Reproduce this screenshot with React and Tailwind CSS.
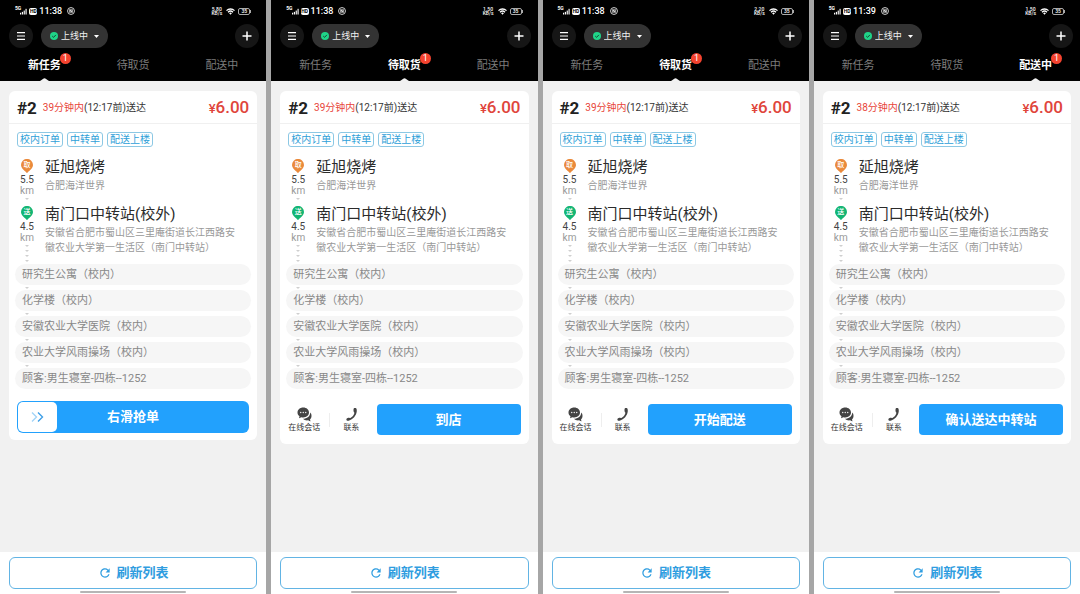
import React from "react";
import { MdRefresh } from "react-icons/md";

const TABS = ["新任务", "待取货", "配送中"];
const TAGS = ["校内订单", "中转单", "配送上楼"];
const STOPS = [
  "研究生公寓（校内）",
  "化学楼（校内）",
  "安徽农业大学医院（校内）",
  "农业大学风雨操场（校内）",
  "顾客:男生寝室-四栋--1252",
];
const SCREENS = [
  { time: "11:38", speed: "5.80", tab: 0, minutes: 39, action: null },
  { time: "11:38", speed: "1.50", tab: 1, minutes: 39, action: "到店" },
  { time: "11:38", speed: "2.20", tab: 1, minutes: 39, action: "开始配送" },
  { time: "11:39", speed: "1.50", tab: 2, minutes: 38, action: "确认送达中转站" },
];

function StatusBar({ time, speed }) {
  return (
    <div className="flex h-[22px] items-center justify-between px-[15px] text-white">
      <div className="flex items-center">
        <span className="self-start text-[5px] leading-[6px] font-bold">5G</span>
        <svg className="-ml-px h-2 w-[7px]" viewBox="0 0 8 8" fill="#fff" aria-hidden="true">
          <rect x="0" y="6" width="1.3" height="2" />
          <rect x="2.1" y="5" width="1.3" height="3" />
          <rect x="4.2" y="3.5" width="1.3" height="4.5" />
          <rect x="6.3" y="1.5" width="1.3" height="6.5" />
        </svg>
        <span className="ml-[2px] flex h-[7px] w-2 items-center justify-center rounded-xs bg-white text-[5px] leading-[7px] font-bold text-black">HD</span>
        <span className="ml-[2px] text-[9px] leading-3 font-medium">{time}</span>
        <svg className="ml-[5px] h-2 w-2" viewBox="0 0 16 16" fill="none" stroke="#e5e5e5" strokeWidth="1.8" aria-hidden="true">
          <circle cx="8" cy="8" r="6.9" />
          <path d="M5.5 11.5V5l5 6V4.500M8 4v8" />
        </svg>
      </div>
      <div className="flex items-center">
        <span className="flex flex-col items-center text-[5px] leading-[4px] font-medium">
          <span>{speed}</span>
          <span>KB/s</span>
        </span>
        <svg className="ml-[4px] h-[7px] w-[9px]" viewBox="0 0 18 14" fill="none" stroke="#fff" strokeWidth="2.6" aria-hidden="true">
          <path d="M1 5.200a11.500 11.500 0 0 1 16 0M4 8.400a7.200 7.200 0 0 1 10 0" />
          <path d="M6.200 10.500a4 4 0 0 1 5.600 0L9 13.500z" fill="#fff" stroke="none" />
        </svg>
        <span className="ml-[3px] flex h-[7px] w-[12px] items-center justify-center rounded-xs border border-[#aaa] text-[5px] leading-[5px] font-medium">35</span>
        <span className="h-[3px] w-px bg-[#aaa]" />
      </div>
    </div>
  );
}

function Header({ time, speed, tab }) {
  return (
    <header className="bg-black text-white">
      <StatusBar time={time} speed={speed} />
      <div className="mt-[2px] flex items-center pr-[7px] pl-[9px]">
        <button type="button" aria-label="菜单" className="flex size-6 items-center justify-center rounded-full bg-[#161616]">
          <svg className="size-2" viewBox="0 0 8 8" stroke="#fff" strokeWidth="1.100" aria-hidden="true">
            <path d="M0 .6h8M0 4h8M0 7.400h8" />
          </svg>
        </button>
        <label className="ml-2 flex h-6 items-center rounded-full bg-[#333] px-[9px]">
          <svg className="size-2" viewBox="0 0 16 16" aria-hidden="true">
            <circle cx="8" cy="8" r="8" fill="#1fd488" />
            <path d="M4.500 8.200l2.600 2.500L11.800 5.800" fill="none" stroke="#14352a" strokeWidth="1.800" />
          </svg>
          <select aria-label="接单状态" className="ml-[3px] h-4 w-[30px] appearance-none bg-transparent text-[9px] leading-4 text-[#f0f0f0] outline-none">
            <option>上线中</option>
          </select>
          <svg className="ml-[3px] h-[3px] w-[5px]" viewBox="0 0 10 6" fill="#fff" aria-hidden="true">
            <path d="M0 0h10L5 6z" />
          </svg>
        </label>
        <button type="button" aria-label="添加" className="ml-auto flex size-6 items-center justify-center rounded-full bg-[#161616]">
          <svg className="size-[10px]" viewBox="0 0 10 10" stroke="#fff" strokeWidth="1.500" aria-hidden="true">
            <path d="M5 .5v9M.5 5h9" />
          </svg>
        </button>
      </div>
      <div role="tablist" className="grid h-[33px] grid-cols-3">
        {TABS.map((name, i) => (
          <button
            key={name}
            type="button"
            role="tab"
            aria-selected={i === tab}
            className={
              "relative flex items-center justify-center pt-[3px] text-[11px] leading-4 " +
              (i === tab ? "font-bold text-white" : "text-[#7c7c7c]")
            }
          >
            <span className="relative">
              {name}
              {i === tab && (
                <span className="absolute -top-[5px] -right-[10px] flex size-[11px] items-center justify-center rounded-full bg-[#f5432f] text-[9px] leading-none font-normal">1</span>
              )}
            </span>
            {i === tab && (
              <svg className="absolute bottom-0 h-[3px] w-[9px]" viewBox="0 0 9 3" fill="#f1f1f1" aria-hidden="true">
                <path d="M0 3L3.700.4Q4.500 0 5.300.4L9 3z" />
              </svg>
            )}
          </button>
        ))}
      </div>
    </header>
  );
}

function Ticks({ count }) {
  return (
    <span className="flex flex-col items-center gap-[3px]" aria-hidden="true">
      {Array.from({ length: count }, (_, i) => (
        <svg key={i} className="h-[2px] w-[4px]" viewBox="0 0 8 4" fill="#cfcfcf">
          <path d="M0 0h8L4 4z" />
        </svg>
      ))}
    </span>
  );
}

function Pin({ label, tone }) {
  return (
    <span className="relative flex h-[14px] w-3 justify-center">
      <svg className={"absolute inset-0 h-[14px] w-3 " + tone} viewBox="0 0 12 14" fill="currentColor" aria-hidden="true">
        <path d="M6 14C4.600 12.200 0 9.700 0 5.900a6 6 0 0 1 12 0C12 9.700 7.400 12.200 6 14z" />
      </svg>
      <span className="relative text-[7px] leading-3 font-medium text-white">{label}</span>
    </span>
  );
}

function Place({ pin, tone, distance, ticks, name, address }) {
  return (
    <div className="flex">
      <div className="flex w-5 shrink-0 flex-col items-center pt-[3px]">
        <Pin label={pin} tone={tone} />
        <span className="text-[10px] leading-[14px] text-[#444]">{distance}</span>
        <span className="mb-[3px] text-[10px] leading-[8px] text-[#999]">km</span>
        <Ticks count={ticks} />
      </div>
      <div className="ml-2 min-w-0 flex-1 pr-2">
        <h2 className="text-[15px] leading-[22px] text-[#2b2b2b]">{name}</h2>
        <p className="text-[10px] leading-[15px] text-[#999]">{address}</p>
      </div>
    </div>
  );
}

function ChatIcon() {
  return (
    <svg className="size-[15px]" viewBox="0 0 30 30" fill="#444" aria-hidden="true">
      <path d="M26.500 11c2 2 2.500 4.300 2.500 7 0 3-1.200 5.200-3 6.800.1 1.600.6 2.700 1.600 3.900-2.200-.2-3.800-.9-5.200-2-4.200.7-8-.5-10.300-3.200C20 23.500 26.500 18.500 26.500 11z" />
      <path d="M12.500 1C5.800 1 1 5.400 1 11c0 3.200 1.500 5.900 4 7.700l-1 4 4.800-2.400c1.200.3 2.400.5 3.700.5C19.200 20.800 24 16.600 24 11S19.200 1 12.500 1z" />
      <g fill="#fff">
        <circle cx="7.500" cy="11" r="1.300" />
        <circle cx="12.500" cy="11" r="1.300" />
        <circle cx="17.500" cy="11" r="1.300" />
      </g>
    </svg>
  );
}

function PhoneIcon() {
  return (
    <svg className="size-[15px]" viewBox="0 0 30 30" fill="#444" aria-hidden="true">
      <path d="M19.800 2.500c1.200-.7 3.300-.8 4.400.1 1.200 1 1.600 3.600 1.300 6.400C24.600 17 18 25 9.500 27.400c-1.800.4-3.600.2-4.300-.8-.7-1-.5-2.700.3-3.700.8-.9 3.800-1.800 5-1.400 1 .4 1.300 1 2.300.6 4-1.800 7-6 8-10 .2-1-.7-1.300-1.200-2.200-.8-1.500-.9-6.500.2-7.400z" />
    </svg>
  );
}

function Contact({ icon, label }) {
  return (
    <button type="button" className="flex flex-col items-center text-[8px] leading-[11px] text-[#333]">
      {icon}
      {label}
    </button>
  );
}

function OrderCard({ minutes, action }) {
  return (
    <article className="mx-[9px] mt-[10px] rounded-md bg-white">
      <div className="flex h-[33px] items-center border-b border-[#f0f0f0] px-2 pt-px">
        <span className="text-[17px] leading-6 font-bold text-[#222]">#2</span>
        <span className="ml-[6px] text-[10px] leading-4 text-[#333]">
          <span className="text-[#e8453a]">{minutes}分钟内</span>(12:17前)送达
        </span>
        <span className="ml-auto text-[17px] leading-6 font-medium text-[#e0453b]">
          <span className="text-[13px]">¥</span>6.00
        </span>
      </div>
      <ul className="mt-2 flex gap-1 px-2">
        {TAGS.map((tag) => (
          <li key={tag} className="rounded-[3px] border border-[#8cc8e4] px-[2px] text-[10px] leading-[13px] text-[#2f9fd8]">
            {tag}
          </li>
        ))}
      </ul>
      <div className="mt-[9px] flex flex-col gap-[3px] px-2">
        <Place pin="取" tone="text-[#ea8a3c]" distance="5.5" ticks={1} name="延旭烧烤" address="合肥海洋世界" />
        <Place
          pin="送"
          tone="text-[#12b573]"
          distance="4.5"
          ticks={4}
          name="南门口中转站(校外)"
          address="安徽省合肥市蜀山区三里庵街道长江西路安徽农业大学第一生活区（南门中转站）"
        />
      </div>
      <ul className="mt-[2px] flex flex-col px-[6px]">
        {STOPS.map((stop, i) => (
          <li key={stop}>
            {i > 0 && (
              <div className="flex h-[5px] items-center pl-[10px]">
                <Ticks count={1} />
              </div>
            )}
            <p className="rounded-full bg-[#f6f6f6] px-[7px] text-[11px] leading-[21px] text-[#888]">{stop}</p>
          </li>
        ))}
      </ul>
      {action ? (
        <div className="mt-[15px] flex items-center px-2 pb-[9px]">
          <Contact icon={<ChatIcon />} label="在线会话" />
          <span className="ml-[9px] h-[14px] w-px bg-[#eee]" />
          <div className="flex flex-1 justify-center pr-1">
            <Contact icon={<PhoneIcon />} label="联系" />
          </div>
          <button type="button" className="h-[31px] w-[62%] shrink-0 rounded-sm bg-[#22a1fd] text-[13px] leading-5 font-bold text-white">
            {action}
          </button>
        </div>
      ) : (
        <div className="mt-3 px-2 pb-[7px]">
          <button type="button" className="relative flex h-8 w-full items-center justify-center rounded-md bg-[#22a1fd] text-[13px] leading-5 font-bold text-white">
            <span className="absolute inset-y-px left-px flex w-[39px] items-center justify-center rounded-[5px] bg-white">
              <svg className="h-[10px] w-[13px]" viewBox="0 0 26 20" fill="none" strokeWidth="2.800" aria-hidden="true">
                <path d="M2 1l9 9-9 9" stroke="#a3d4f8" />
                <path d="M14 1l9 9-9 9" stroke="#3f9fe6" />
              </svg>
            </span>
            右滑抢单
          </button>
        </div>
      )}
    </article>
  );
}

function Screen({ time, speed, tab, minutes, action }) {
  return (
    <section className="flex min-w-0 flex-col bg-[#f1f1f1]">
      <Header time={time} speed={speed} tab={tab} />
      <OrderCard minutes={minutes} action={action} />
      <footer className="mt-auto flex flex-col items-center bg-white px-[9px] pt-[5px] pb-px">
        <button type="button" className="flex h-8 w-full items-center justify-center gap-[5px] rounded-md border border-[#62b4e4] text-[13px] leading-5 font-bold text-[#2f9de0]">
          <MdRefresh className="size-[14px]" aria-hidden="true" />
          刷新列表
        </button>
        <span className="mt-[2px] h-[2px] w-[106px] rounded-full bg-[#b5b5b5]" />
      </footer>
    </section>
  );
}

export default function App() {
  return (
    <main className="grid min-h-screen grid-cols-4 gap-[5px] bg-[#a6a6a6] font-['Roboto','Noto_Sans_CJK_SC',sans-serif]">
      {SCREENS.map((screen, i) => (
        <Screen key={i} {...screen} />
      ))}
    </main>
  );
}
